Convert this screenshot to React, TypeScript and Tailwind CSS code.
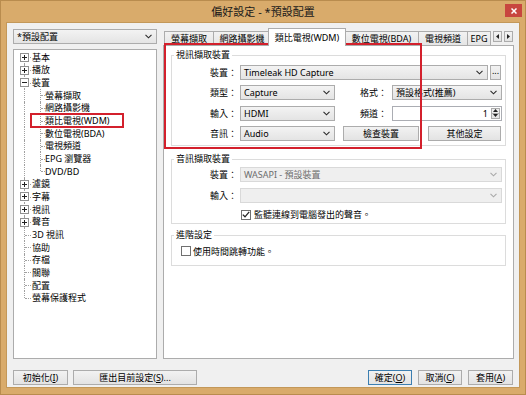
import type { ReactNode } from 'react';

type TreeRow = { label: string; level: 0 | 1; box?: '+' | '-'; first?: boolean; last?: boolean };

const treeRows: TreeRow[] = [
  { label: '基本', level: 0, box: '+', first: true },
  { label: '播放', level: 0, box: '+' },
  { label: '裝置', level: 0, box: '-' },
  { label: '螢幕擷取', level: 1 },
  { label: '網路攝影機', level: 1 },
  { label: '類比電視(WDM)', level: 1 },
  { label: '數位電視(BDA)', level: 1 },
  { label: '電視頻道', level: 1 },
  { label: 'EPG 瀏覽器', level: 1 },
  { label: 'DVD/BD', level: 1, last: true },
  { label: '濾鏡', level: 0, box: '+' },
  { label: '字幕', level: 0, box: '+' },
  { label: '視訊', level: 0, box: '+' },
  { label: '聲音', level: 0, box: '+' },
  { label: '3D 視訊', level: 0 },
  { label: '協助', level: 0 },
  { label: '存檔', level: 0 },
  { label: '關聯', level: 0 },
  { label: '配置', level: 0 },
  { label: '螢幕保護程式', level: 0, last: true },
];

function Chevron({ muted }: { muted?: boolean }) {
  return (
    <svg width="7" height="5" viewBox="0 0 7 5" className="shrink-0">
      <path d="M0.5 0.8 L3.5 3.8 L6.5 0.8" fill="none" stroke={muted ? '#a9a9a9' : '#2b2b2b'} strokeWidth="1.1" />
    </svg>
  );
}

function Combo({ value, className, disabled }: { value?: string; className: string; disabled?: boolean }) {
  return (
    <div
      className={`flex h-[15px] shrink-0 items-center justify-between border pl-[3px] pr-[4px] ${
        disabled
          ? 'border-[#d9d9d9] bg-[#efefef] text-[#6d6d6d]'
          : 'border-[#acacac] bg-gradient-to-b from-[#f3f3f3] to-[#e4e4e4] text-black'
      } ${className}`}
    >
      <span className="whitespace-nowrap leading-[13px]">{value}</span>
      <Chevron muted={disabled} />
    </div>
  );
}

function Btn({ children, className, focused }: { children: ReactNode; className: string; focused?: boolean }) {
  return (
    <button
      type="button"
      className={`flex h-[15px] shrink-0 items-center justify-center border bg-gradient-to-b from-[#f2f2f2] to-[#e3e3e3] leading-none ${
        focused ? 'border-[#3c7fb1]' : 'border-[#acacac]'
      } ${className}`}
    >
      {children}
    </button>
  );
}

function Check({ checked }: { checked?: boolean }) {
  return (
    <span className="flex h-[10px] w-[10px] shrink-0 items-center justify-center border border-[#707070] bg-white">
      {checked && (
        <svg width="8" height="7" viewBox="0 0 8 7">
          <path d="M0.8 3.6 L3 5.8 L7.2 0.9" fill="none" stroke="#222" strokeWidth="1.3" />
        </svg>
      )}
    </span>
  );
}

function Label({ text, className }: { text: string; className: string }) {
  return <span className={`shrink-0 text-right leading-none ${className}`}>{text}</span>;
}

function Group({ title, children, className }: { title: string; children: ReactNode; className?: string }) {
  return (
    <fieldset className={`border border-[#dcdcdc] ${className ?? ''}`}>
      <legend className="ml-[2px] px-[2px] leading-[12px]">{title}</legend>
      {children}
    </fieldset>
  );
}

function Tree() {
  return (
    <div className="flex-1 border border-[#acacac] bg-white pt-[1px]">
      {treeRows.map((row) => {
        const rootLine = row.first ? 'top-1/2 bottom-0' : row.last && row.level === 0 ? 'top-0 bottom-1/2' : 'top-0 bottom-0';
        return (
          <div key={row.label} className="relative flex h-[12.66px] items-center">
            <span className={`absolute left-[10px] border-l border-dotted border-[#a0a0a0] ${rootLine}`} />
            {row.level === 0 ? (
              <span className="absolute left-[11px] top-1/2 w-[6px] border-t border-dotted border-[#a0a0a0]" />
            ) : (
              <>
                <span
                  className={`absolute left-[26px] border-l border-dotted border-[#a0a0a0] ${
                    row.last ? 'top-0 bottom-1/2' : 'top-0 bottom-0'
                  }`}
                />
                <span className="absolute left-[27px] top-1/2 w-[4px] border-t border-dotted border-[#a0a0a0]" />
              </>
            )}
            {row.box && (
              <span className="absolute left-[6px] top-[2px] flex h-[9px] w-[9px] items-center justify-center border border-[#919191] bg-white">
                <svg width="5" height="5" viewBox="0 0 5 5">
                  <path d="M0 2.5 H5" stroke="#222" strokeWidth="1" />
                  {row.box === '+' && <path d="M2.5 0 V5" stroke="#222" strokeWidth="1" />}
                </svg>
              </span>
            )}
            <span className={`whitespace-nowrap leading-none ${row.level === 0 ? 'pl-[18px]' : 'pl-[31px]'}`}>{row.label}</span>
          </div>
        );
      })}
    </div>
  );
}

function Tabs() {
  return (
    <div className="flex h-[16px] items-end pl-[1px]">
      <div className="flex h-[14px] w-[49px] shrink-0 items-center justify-center border-l border-t border-[#acacac] bg-gradient-to-b from-[#f2f2f2] to-[#e5e5e5] leading-none">
        螢幕擷取
      </div>
      <div className="flex h-[14px] w-[57px] shrink-0 items-center justify-center border-l border-t border-[#acacac] bg-gradient-to-b from-[#f2f2f2] to-[#e5e5e5] leading-none">
        網路攝影機
      </div>
      <div className="relative z-10 -mx-[2px] mb-[-1px] flex h-[18px] w-[78px] shrink-0 items-center justify-center border-l border-r border-t border-[#acacac] bg-white pb-[1px] leading-none">
        類比電視(WDM)
      </div>
      <div className="flex h-[14px] w-[74px] shrink-0 items-center justify-center border-l border-t border-[#acacac] bg-gradient-to-b from-[#f2f2f2] to-[#e5e5e5] leading-none">
        數位電視(BDA)
      </div>
      <div className="flex h-[14px] w-[49px] shrink-0 items-center justify-center border-l border-t border-[#acacac] bg-gradient-to-b from-[#f2f2f2] to-[#e5e5e5] leading-none">
        電視頻道
      </div>
      <div className="flex h-[14px] w-[24px] shrink-0 items-center justify-center border-l border-r border-t border-[#acacac] bg-gradient-to-b from-[#f2f2f2] to-[#e5e5e5] leading-none">
        EPG
      </div>
      <div className="ml-auto mr-[1px] flex gap-[2px] self-start pt-[2px]">
        <span className="flex h-[11px] w-[9px] items-center justify-center border border-[#acacac] bg-gradient-to-b from-[#f4f4f4] to-[#e3e3e3]">
          <svg width="3" height="5" viewBox="0 0 3 5">
            <path d="M3 0 V5 L0 2.5 Z" fill="#222" />
          </svg>
        </span>
        <span className="flex h-[11px] w-[9px] items-center justify-center border border-[#acacac] bg-gradient-to-b from-[#f4f4f4] to-[#e3e3e3]">
          <svg width="3" height="5" viewBox="0 0 3 5">
            <path d="M0 0 V5 L3 2.5 Z" fill="#222" />
          </svg>
        </span>
      </div>
    </div>
  );
}

function Spin() {
  return (
    <div className="flex h-[15px] w-[110px] shrink-0 items-center justify-end border border-[#abadb3] bg-white pr-[1px]">
      <span className="mr-[3px] leading-none">1</span>
      <div className="flex h-[11px] w-[9px] flex-col border border-[#acacac]">
        <span className="flex flex-1 items-center justify-center border-b border-[#acacac] bg-[#eeeeee]">
          <svg width="5" height="3" viewBox="0 0 5 3">
            <path d="M0 3 H5 L2.5 0 Z" fill="#222" />
          </svg>
        </span>
        <span className="flex flex-1 items-center justify-center bg-[#e6e6e6]">
          <svg width="5" height="3" viewBox="0 0 5 3">
            <path d="M0 0 H5 L2.5 3 Z" fill="#222" />
          </svg>
        </span>
      </div>
    </div>
  );
}

export default function App() {
  return (
    <div className="relative flex h-[395px] w-[526px] flex-col overflow-hidden border border-[#b98c4e] bg-[#d9ab6b] px-[5px] pb-[6px] font-['Noto_Sans','Noto_Sans_CJK_TC',sans-serif] text-[9px] text-black">
      <div className="relative flex h-[21px] shrink-0 items-center justify-center">
        <span className="text-[11px] leading-none text-[#1a1a1a]">偏好設定 - *預設配置</span>
        <span className="absolute right-[-2px] top-[3px] flex h-[13px] w-[17px] items-center justify-center bg-[#c8463f]">
          <svg width="6" height="6" viewBox="0 0 6 6">
            <path d="M0.5 0.5 L5.5 5.5 M5.5 0.5 L0.5 5.5" stroke="#fff" strokeWidth="1.5" />
          </svg>
        </span>
      </div>

      <div className="flex flex-1 flex-col border border-[#c39859] bg-[#f0f0f0] pb-[3px] pl-[6px] pr-[5px] pt-[6px]">
        <div className="flex h-[330px] gap-[6px]">
          <div className="flex w-[144px] shrink-0 flex-col gap-[5px]">
            <Combo value="*預設配置" className="w-[144px]" />
            <Tree />
          </div>

          <div className="flex flex-1 flex-col">
            <Tabs />
            <div className="flex flex-1 flex-col border border-[#acacac] bg-white px-[7px] pt-[3px]">
              <Group title="視訊擷取裝置">
                <div className="flex flex-col gap-[5.5px] pb-[4px] pt-[3.5px]">
                  <div className="flex h-[15px] items-center">
                    <Label text="裝置：" className="w-[65px]" />
                    <Combo value="Timeleak HD Capture" className="ml-[3px] w-[248px]" />
                    <Btn className="ml-[2px] w-[11px] pb-[3px]">...</Btn>
                  </div>
                  <div className="flex h-[15px] items-center">
                    <Label text="類型：" className="w-[65px]" />
                    <Combo value="Capture" className="ml-[3px] w-[95px]" />
                    <Label text="格式：" className="w-[52px]" />
                    <Combo value="預設格式(推薦)" className="ml-[5px] w-[110px]" />
                  </div>
                  <div className="flex h-[15px] items-center">
                    <Label text="輸入：" className="w-[65px]" />
                    <Combo value="HDMI" className="ml-[3px] w-[95px]" />
                    <Label text="頻道：" className="w-[52px]" />
                    <div className="ml-[5px]">
                      <Spin />
                    </div>
                  </div>
                  <div className="flex h-[15px] items-center">
                    <Label text="音訊：" className="w-[65px]" />
                    <Combo value="Audio" className="ml-[3px] w-[95px]" />
                    <Btn className="ml-[8px] w-[76px]">檢查裝置</Btn>
                    <Btn className="ml-[9px] w-[73px]">其他設定</Btn>
                  </div>
                </div>
              </Group>

              <Group title="音訊擷取裝置" className="mt-[7px]">
                <div className="flex flex-col gap-[6px] pb-[2.5px] pt-[1.5px]">
                  <div className="flex h-[15px] items-center">
                    <Label text="裝置：" className="w-[65px]" />
                    <Combo value="WASAPI - 預設裝置" className="ml-[3px] w-[262px]" disabled />
                  </div>
                  <div className="flex h-[15px] items-center">
                    <Label text="輸入：" className="w-[65px]" />
                    <Combo className="ml-[3px] w-[262px]" disabled />
                  </div>
                  <div className="flex h-[12px] items-center gap-[3px] pl-[69px]">
                    <Check checked />
                    <span className="leading-none">監聽連線到電腦發出的聲音。</span>
                  </div>
                </div>
              </Group>

              <Group title="進階設定" className="mt-[5px]">
                <div className="flex h-[12px] items-center gap-[2px] pl-[9px] mt-[4px] mb-[8px]">
                  <Check />
                  <span className="leading-none">使用時間跳轉功能。</span>
                </div>
              </Group>
            </div>
          </div>
        </div>

        <div className="mt-[11px] flex h-[14px] items-center pr-[1px]">
          <Btn className="h-[14px] w-[55px]">
            初始化(<span className="underline">I</span>)
          </Btn>
          <Btn className="ml-[5px] h-[14px] w-[124px]">
            匯出目前設定(<span className="underline">S</span>)...
          </Btn>
          <Btn className="ml-auto h-[14px] w-[44px]" focused>
            確定(<span className="underline">O</span>)
          </Btn>
          <Btn className="ml-[6px] h-[14px] w-[44px]">
            取消(<span className="underline">C</span>)
          </Btn>
          <Btn className="ml-[6px] h-[14px] w-[45px]">
            套用(<span className="underline">A</span>)
          </Btn>
        </div>
      </div>

      <div className="pointer-events-none absolute left-[29px] top-[112px] h-[15px] w-[94px] border-2 border-[#d3202c]" />
      <div className="pointer-events-none absolute left-[163px] top-[42px] h-[106px] w-[258px] border-2 border-[#d3202c]" />
    </div>
  );
}
